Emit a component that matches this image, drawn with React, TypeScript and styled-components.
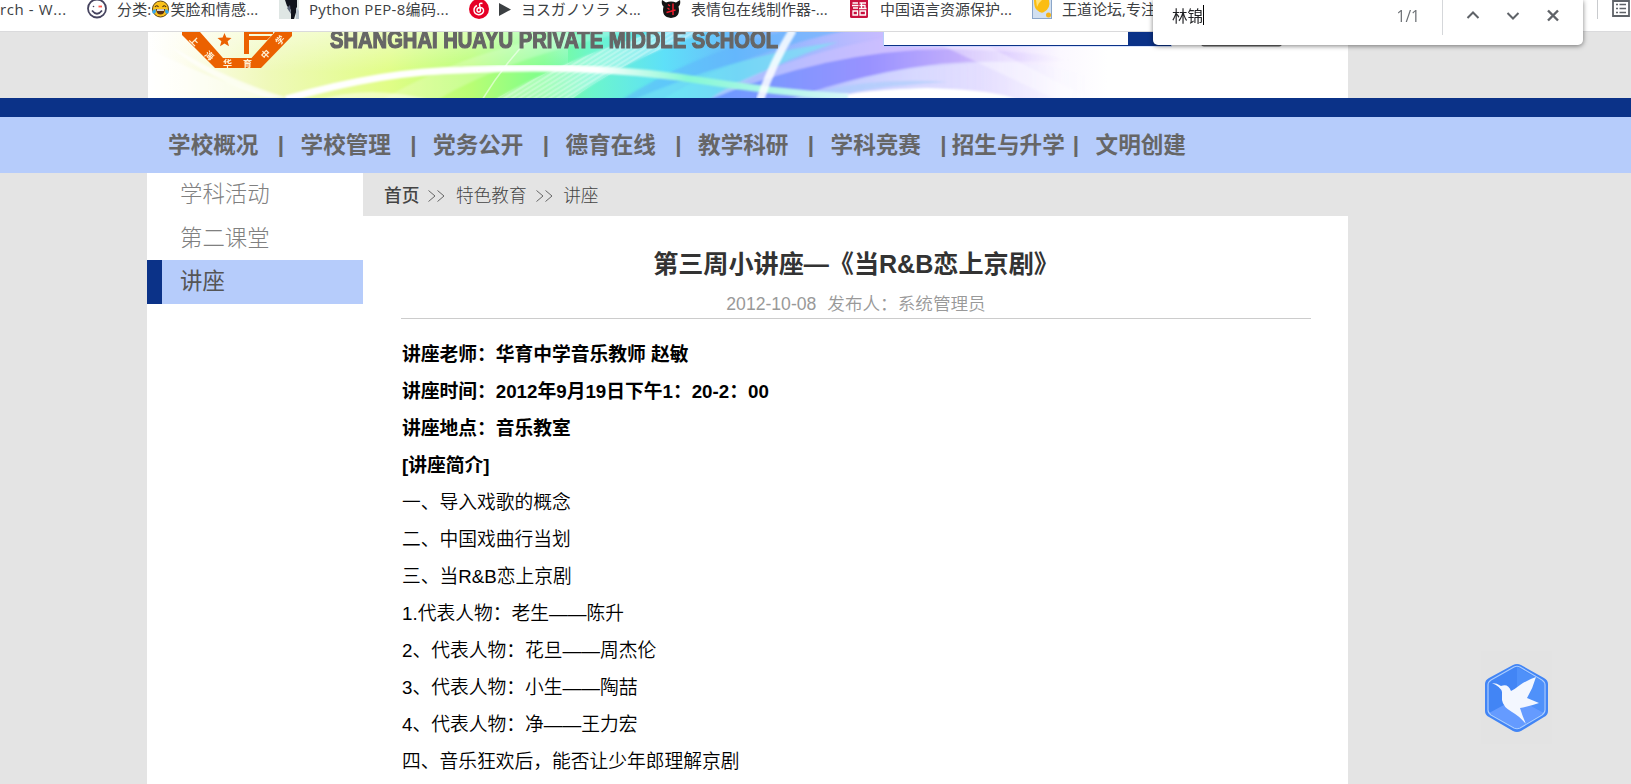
import React from "react";
import styled, { createGlobalStyle } from "styled-components";

const GlobalStyle = createGlobalStyle`
  * { box-sizing: border-box; }
  body { margin: 0; background: #e4e4e4; font-family: "Liberation Sans", "Noto Sans CJK SC", sans-serif; }
`;

const Page = styled.div`
  position: relative;
  display: flex;
  flex-direction: column;
  width: 1631px;
  height: 784px;
  overflow: hidden;
  background: #e4e4e4;
`;

const BookmarkBar = styled.div`
  display: flex;
  flex: none;
  height: 32px;
  overflow: hidden;
  background: #fff;
  border-bottom: 1px solid #dadadc;
`;

const Bookmark = styled.div<{ $w: number; $ls?: number }>`
  display: flex;
  flex: none;
  gap: 10px;
  width: ${(p) => p.$w}px;
  height: 20px;
  align-items: center;
  white-space: nowrap;
  font: 15px/18px "Open Sans", "Noto Sans CJK SC", sans-serif;
  letter-spacing: ${(p) => p.$ls ?? 0}px;
  color: #3c4043;
  svg { flex: none; }
`;

const BookmarkLabel = styled.span`
  display: flex;
  align-items: center;
  height: 20px;
  padding-bottom: 2px;
`;

const ListButton = styled.div`
  display: flex;
  margin-left: auto;
  padding: 0 1px 0 14px;
  height: 19px;
  border-left: 1px solid #c9cbce;
`;

const FindBar = styled.div`
  position: absolute;
  top: 0;
  left: 1153px;
  display: flex;
  width: 430px;
  height: 45px;
  padding-left: 19px;
  background: #fff;
  border-radius: 0 0 5px 5px;
  box-shadow: 0 1px 5px rgba(0, 0, 0, 0.5);
  font: 15.5px/32px "Open Sans", "Noto Sans CJK SC", sans-serif;
  color: #202124;
`;

const Query = styled.span`
  height: 20px;
  margin-top: 5px;
  line-height: 22px;
  border-right: 1px solid #000;
`;

const Count = styled.span`
  margin-left: auto;
  padding-right: 22px;
  color: #6b6f74;
`;

const FindActions = styled.div`
  display: flex;
  width: 141px;
  height: 35px;
  border-left: 1px solid #d5d7da;
`;

const Banner = styled.div`
  flex: none;
  height: 66px;
  padding-left: 148px;
  svg { display: block; }
`;

const Stripe = styled.div`
  flex: none;
  height: 19px;
  background: #0b3288;
`;

const Nav = styled.nav`
  display: flex;
  flex: none;
  height: 56px;
  padding-left: 147px;
  background: #b6ccfb;
`;

const NavItem = styled.a`
  display: flex;
  align-items: center;
  justify-content: center;
  width: 132.5px;
  height: 52px;
  white-space: nowrap;
  font-size: 22.6px;
  font-weight: 700;
  color: #666;
`;

const NavDivider = styled.span`
  width: 0;
  display: flex;
  justify-content: center;
  text-indent: 3px;
  font-size: 22.5px;
  font-weight: 700;
  line-height: 56px;
  color: #666;
`;

const Main = styled.div`
  display: flex;
  flex: 1;
  padding-left: 147px;
`;

const Sidebar = styled.aside`
  width: 216px;
  background: #fff;
`;

const SideItem = styled.div<{ $active?: boolean }>`
  height: ${(p) => (p.$active ? 44 : 43.5)}px;
  padding-left: ${(p) => (p.$active ? 18 : 33)}px;
  border-left: ${(p) => (p.$active ? "15px solid #0b3288" : "0")};
  background: ${(p) => (p.$active ? "#b6ccfb" : "#fff")};
  font-size: 22.4px;
  line-height: ${(p) => (p.$active ? 44 : 43)}px;
  font-weight: ${(p) => (p.$active ? 400 : 300)};
  color: ${(p) => (p.$active ? "#555" : "#808080")};
`;

const Content = styled.main`
  display: flex;
  flex-direction: column;
  width: 985px;
`;

const Crumbs = styled.div`
  display: flex;
  height: 43px;
  padding-left: 21px;
  font: 300 17.7px/43px "Noto Sans CJK SC", sans-serif;
  color: #444;
`;

const Home = styled.span`
  font-weight: 500;
`;

const CrumbArrow = styled.svg`
  width: 17px;
  height: 43px;
  margin: 0 10.5px 0 9px;
`;

const Article = styled.article`
  flex: 1;
  padding: 28px 37px 0 38px;
  background: #fff;
`;

const Title = styled.h1`
  margin: 0;
  height: 40px;
  font-size: 25.1px;
  line-height: 40px;
  font-weight: 700;
  text-align: center;
  color: #333;
`;

const Meta = styled.div`
  display: flex;
  justify-content: center;
  gap: 11px;
  height: 35px;
  border-bottom: 1px solid #ccc;
  font-size: 17.6px;
  line-height: 41px;
  font-weight: 350;
  color: #999;
`;

const DateText = styled.span`
  font-weight: 400;
`;

const Body = styled.div`
  padding: 17px 0 0 1px;
`;

const Line = styled.p<{ $bold?: boolean }>`
  margin: 0;
  height: 37px;
  line-height: 37px;
  white-space: pre;
  font-size: 18.75px;
  font-weight: ${(p) => (p.$bold ? 700 : 350)};
  color: #000;
`;

const FloatingBird = styled.div`
  position: absolute;
  left: 1481px;
  top: 651px;
  width: 71px;
  height: 93px;
  background: #e3e3e3;
`;

const LOGO_CHARS = [
  { c: "上", x: 46.5, y: 9, r: 45 },
  { c: "海", x: 61.5, y: 23.5, r: 40 },
  { c: "华", x: 79.5, y: 31, r: 0 },
  { c: "育", x: 99.5, y: 31, r: 0 },
  { c: "中", x: 117.5, y: 22, r: -45 },
  { c: "学", x: 132, y: 8, r: -45 },
];

function BannerArt() {
  return (
    <svg width="1200" height="66" viewBox="0 0 1200 66">
      <defs>
        <linearGradient id="base" gradientUnits="userSpaceOnUse" x1="0" y1="0" x2="1200" y2="0">
          <stop offset="0" stopColor="#fff" />
          <stop offset=".03" stopColor="#fdfdec" />
          <stop offset=".1" stopColor="#eff9b9" />
          <stop offset=".2" stopColor="#e1fd87" />
          <stop offset=".27" stopColor="#b8fe74" />
          <stop offset=".33" stopColor="#7cfe8c" />
          <stop offset=".37" stopColor="#6cf6cc" />
          <stop offset=".43" stopColor="#5ee0f8" />
          <stop offset=".49" stopColor="#6cbafc" />
          <stop offset=".55" stopColor="#a3b8ff" />
          <stop offset=".62" stopColor="#cdbcff" />
          <stop offset=".69" stopColor="#e3d2ff" />
          <stop offset=".76" stopColor="#fbf8ff" />
          <stop offset=".8" stopColor="#fff" />
        </linearGradient>
        <linearGradient id="topFade" x1="0" y1="0" x2="0" y2="1">
          <stop offset="0" stopColor="#fff" stopOpacity=".45" />
          <stop offset="1" stopColor="#fff" stopOpacity="0" />
        </linearGradient>
        <linearGradient id="violet" gradientUnits="userSpaceOnUse" x1="560" y1="0" x2="920" y2="0">
          <stop offset="0" stopColor="#6a9bff" />
          <stop offset=".45" stopColor="#9992ff" />
          <stop offset=".7" stopColor="#c3aefc" />
          <stop offset="1" stopColor="#efe6ff" stopOpacity="0" />
        </linearGradient>
        <linearGradient id="haze" gradientUnits="userSpaceOnUse" x1="640" y1="0" x2="960" y2="0">
          <stop offset="0" stopColor="#b6c4ff" />
          <stop offset=".4" stopColor="#d8dcff" />
          <stop offset="1" stopColor="#fff" stopOpacity="0" />
        </linearGradient>
        <linearGradient id="swoosh" gradientUnits="userSpaceOnUse" x1="120" y1="0" x2="720" y2="0">
          <stop offset="0" stopColor="#fff" />
          <stop offset=".55" stopColor="#fff" />
          <stop offset=".7" stopColor="#86f8d4" />
          <stop offset="1" stopColor="#dff6ff" />
        </linearGradient>
        <pattern id="hatch" width="4" height="4" patternUnits="userSpaceOnUse" patternTransform="rotate(-32)">
          <path d="M0 1H4" stroke="#fff" strokeWidth="1" opacity=".5" />
        </pattern>
        <filter id="soft"><feGaussianBlur stdDeviation="1" /></filter>
      </defs>
      <rect width="1200" height="66" fill="url(#base)" />
      <rect width="420" height="40" fill="url(#topFade)" />
      <g filter="url(#soft)">
        <path d="M0 66V15Q50 44 130 66Z" fill="#fff" opacity=".6" />
        <path d="M22 14Q80 48 140 66H122Q60 48 22 14Z" fill="#fff" opacity=".7" />
        <path d="M510 70Q590 22 700 -2H640Q540 24 470 70Z" fill="#5eb4fb" opacity=".55" />
        <path d="M480 70Q590 22 690 10Q600 40 570 70Z" fill="#77e9f2" opacity=".6" />
        <path d="M560 68Q630 20 790 -3L850 -3Q700 22 650 68Z" fill="#cdbfff" opacity=".6" />
        <path d="M560 68Q680 18 800 17Q880 18 940 30Q740 24 660 68Z" fill="url(#violet)" />
        <path d="M640 68Q760 25 860 30Q940 35 1000 66Z" fill="url(#haze)" opacity=".85" />
        <path d="M640 68Q710 44 800 50Q700 56 680 68Z" fill="#a9cdfc" opacity=".6" />
        <path d="M680 68Q700 58 780 56Q850 58 870 68Z" fill="#fff" />
        <path d="M230 70Q340 5 470 -4L500 -4Q370 20 285 70Z" fill="#fff" opacity=".22" />
        <path d="M165 70Q220 50 290 70Z" fill="#fff" opacity=".45" />
        <path d="M342 70Q430 20 520 -3L566 -3Q470 30 420 70Z" fill="#eaffff" opacity=".4" />
        <path d="M795 14L905 66H940L840 14Z" fill="#fff" opacity=".35" />
      </g>
      <path d="M342 70Q430 20 520 -3L566 -3Q470 30 420 70Z" fill="url(#hatch)" />
      <path d="M138 67Q235 39 315 38Q430 32 530 45Q620 60 700 65" fill="none" stroke="url(#swoosh)" strokeWidth="7" filter="url(#soft)" />
      <path d="M645 -2Q625 30 612 68" fill="none" stroke="#fff" strokeWidth="8" opacity=".85" filter="url(#soft)" />
      <path d="M390 -2Q360 26 334 68" fill="none" stroke="#fff" strokeWidth="1.5" opacity=".55" />
      <g fill="#eb6100">
        <path d="M34 0V3L67 36H113L144 4V0H127L103.500 26H75L52 0Z" />
        <path d="M76.500 1L78.400 5.600L83.500 6L79.600 9.300L81 14.200L76.500 11.600L72 14.200L73.400 9.300L69.500 6L74.600 5.600Z" />
        <path d="M96 0H125V2H101V4H123L119 8H101V22H96Z" />
      </g>
      {LOGO_CHARS.map((k) => (
        <text
          key={k.c}
          transform={`translate(${k.x} ${k.y}) rotate(${k.r})`}
          textAnchor="middle"
          dominantBaseline="central"
          fontFamily="Noto Sans CJK SC, sans-serif"
          fontSize="9"
          fontWeight="700"
          fill="#fff3d8"
        >
          {k.c}
        </text>
      ))}
      <text
        x="182"
        y="16"
        textLength="448"
        lengthAdjust="spacingAndGlyphs"
        fontFamily="Liberation Sans Narrow, Liberation Sans, sans-serif"
        fontWeight="700"
        fontSize="23"
        fill="#666"
        stroke="#666"
        strokeWidth="1.2"
      >
        SHANGHAI HUAYU PRIVATE MIDDLE SCHOOL
      </text>
      <path d="M736 0H1024V14.500H736Z" fill="#b6ccfb" />
      <path d="M736 0H1023V14H736Z" fill="#0b3288" />
      <path d="M736 0H980V13H736Z" fill="#fff" />
      <path d="M735.500 0V14" stroke="#b6ccfb" />
      <path d="M1053 0V11Q1053 14.500 1056 14.500H1131Q1134 14.500 1134 11V0Z" fill="#666" />
    </svg>
  );
}

const WinkIcon = () => (
  <svg width="20" height="20" viewBox="0 0 20 20" fill="none" stroke="#46445f" strokeWidth="1.800">
    <circle cx="10" cy="8.500" r="9" />
    <path d="M5 10.500Q10 17 15 10.500" />
    <path d="M11.500 6.500H15" stroke="#ff5b4d" />
    <circle cx="6.500" cy="6.500" r=".8" fill="#46445f" stroke="none" />
  </svg>
);

const JoyIcon = () => (
  <svg width="19" height="18" viewBox="0 0 18 18">
    <circle cx="9" cy="9" r="8" fill="#fbc21b" stroke="#5f4517" />
    <path d="M3.500 7Q5 4.500 7 7M11 7Q13 4.500 14.500 7" fill="none" stroke="#4a3010" strokeWidth="1.200" />
    <path d="M4.500 9H13.500Q13 14.500 9 14.500T4.500 9Z" fill="#5b3216" />
    <path d="M5.500 9.300H12.500V10.800H5.500Z" fill="#fff" />
    <path d="M4 9Q0 10.500 1 13Q3 15 4.500 12ZM14 9Q18 10.500 17 13Q15 15 13.500 12Z" fill="#35a8ec" />
  </svg>
);

const PhotoIcon = () => (
  <svg width="20" height="20" viewBox="0 0 20 20">
    <path d="M0 0H20V19H0Z" fill="#dfe6e4" />
    <path d="M6 0H18V9L15 19H12V10L8 6Z" fill="#10131c" />
    <path d="M8 8L11 5L12 14Z" fill="#5a6376" />
    <path d="M17 7L20 11V19H17Z" fill="#b9c5cf" />
  </svg>
);

const MusicIcon = () => (
  <svg width="20" height="20" viewBox="0 0 20 20" fill="none" stroke="#fff" strokeWidth="1.400">
    <circle cx="10" cy="9" r="10" fill="#e60026" stroke="none" />
    <path d="M13.500 3.500Q10.500 2.500 10.500 5L11.500 10Q11.500 12 9.800 12Q8 12 8 10Q8 7.500 11.500 7.500Q15 8 14.500 11.500Q13 15 9.500 14.800Q5 14 5 10Q5 7 8 5.500" />
  </svg>
);

const DevilIcon = () => (
  <svg width="20" height="20" viewBox="0 0 20 20">
    <path d="M1 0L5 2.500Q10 .5 15 2.500L19 0Q20 4 17.500 6.500Q20 17 10 18Q0 17 2.500 6.500Q0 4 1 0Z" fill="#141414" />
    <path d="M7 4.500L9 6M6.500 8L8.500 9.500M5.500 12.500L14.500 10M12 3.500V15" stroke="#f01c2c" strokeWidth="1.500" fill="none" />
  </svg>
);

const SealIcon = () => (
  <svg width="20" height="20" viewBox="0 0 20 20" fill="none" stroke="#fff" strokeWidth="1.300">
    <rect x="0" y="-1" width="18" height="19" rx="1.500" fill="#c8103e" stroke="none" />
    <path d="M2.500 3H8M2 5.500H8.500M3 8H8M3 11H7.500V15H3ZM9.500 3H16M11.500 3V8M9.500 5.500H15V8M9 8.500H16.500M10 11H15.500V15H10Z" />
  </svg>
);

const PageIcon = () => (
  <svg width="20" height="20" viewBox="0 0 20 20">
    <rect x=".5" y="-3" width="19" height="21.500" fill="#d2e0f0" stroke="#8ba6c9" />
    <path d="M2 0H17Q19 8 12 12Q9 14 5 10Q2 8 2 0Z" fill="#fbbd12" />
    <path d="M4 0H10Q6 3 5 7Z" fill="#ffe27a" />
    <circle cx="16.500" cy="15" r="2.500" fill="#f5b417" />
  </svg>
);

const PlayIcon = () => (
  <svg width="12" height="16" viewBox="0 0 12 16">
    <path d="M0 1L12 7.500L0 14Z" fill="#3c4043" />
  </svg>
);

const NAV = ["学校概况", "学校管理", "党务公开", "德育在线", "教学科研", "学科竞赛", "招生与升学", "文明创建"];

const LINES = [
  { t: "讲座老师：华育中学音乐教师 赵敏", b: true },
  { t: "讲座时间：2012年9月19日下午1：20-2：00", b: true },
  { t: "讲座地点：音乐教室", b: true },
  { t: "[讲座简介]", b: true },
  { t: "一、导入戏歌的概念" },
  { t: "二、中国戏曲行当划" },
  { t: "三、当R&B恋上京剧" },
  { t: "1.代表人物：老生——陈升" },
  { t: "2、代表人物：花旦——周杰伦" },
  { t: "3、代表人物：小生——陶喆" },
  { t: "4、代表人物：净——王力宏" },
  { t: "四、音乐狂欢后，能否让少年郎理解京剧" },
];

const Arrows = () => (
  <CrumbArrow viewBox="0 0 17 43" fill="none" stroke="#666" strokeWidth="1">
    <path d="M.5 17.500L7 23L.5 28.500M9.500 17.500L16 23L9.500 28.500" />
  </CrumbArrow>
);

export default function App() {
  return (
    <Page>
      <GlobalStyle />
      <BookmarkBar>
        <Bookmark $w={87} $ls={0.6}><BookmarkLabel>rch - W...</BookmarkLabel></Bookmark>
        <Bookmark $w={192} $ls={0.15}>
          <WinkIcon />
          <BookmarkLabel>分类:<JoyIcon />笑脸和情感...</BookmarkLabel>
        </Bookmark>
        <Bookmark $w={190} $ls={0.3}><PhotoIcon /><BookmarkLabel>Python PEP-8编码...</BookmarkLabel></Bookmark>
        <Bookmark $w={192} $ls={-0.1}>
          <MusicIcon />
          <PlayIcon />
          <BookmarkLabel>ヨスガノソラ メ...</BookmarkLabel>
        </Bookmark>
        <Bookmark $w={189}><DevilIcon /><BookmarkLabel>表情包在线制作器-...</BookmarkLabel></Bookmark>
        <Bookmark $w={182}><SealIcon /><BookmarkLabel>中国语言资源保护...</BookmarkLabel></Bookmark>
        <Bookmark $w={130}><PageIcon /><BookmarkLabel>王道论坛,专注</BookmarkLabel></Bookmark>
        <ListButton>
          <svg width="18" height="18" viewBox="0 0 18 18" fill="none" stroke="#5f6368" strokeWidth="1.800">
            <path d="M1 1H17V16H1Z" />
            <path d="M4 4.500H6M7.500 4.500H14M4 8.500H6M7.500 8.500H14M4 12.500H6M7.500 12.500H14" strokeWidth="1.400" />
          </svg>
        </ListButton>
      </BookmarkBar>
      <Banner><BannerArt /></Banner>
      <Stripe />
      <Nav>
        {NAV.map((n, i) => (
          <React.Fragment key={n}>
            {i > 0 && <NavDivider>|</NavDivider>}
            <NavItem>{n}</NavItem>
          </React.Fragment>
        ))}
      </Nav>
      <Main>
        <Sidebar>
          <SideItem>学科活动</SideItem>
          <SideItem>第二课堂</SideItem>
          <SideItem $active>讲座</SideItem>
        </Sidebar>
        <Content>
          <Crumbs>
            <Home>首页</Home><Arrows />特色教育<Arrows />讲座
          </Crumbs>
          <Article>
            <Title>第三周小讲座—《当R&amp;B恋上京剧》</Title>
            <Meta><DateText>2012-10-08</DateText><span>发布人：系统管理员</span></Meta>
            <Body>
              {LINES.map((l) => <Line key={l.t} $bold={l.b}>{l.t}</Line>)}
            </Body>
          </Article>
        </Content>
      </Main>
      <FindBar>
        <Query>林锦</Query>
        <Count>1/1</Count>
        <FindActions>
          <svg width="130" height="35" viewBox="0 0 130 35" fill="none" stroke="#5f6368" strokeWidth="2">
            <path d="M24.500 18L30 12.500L35.500 18M64.500 13L70 18.500L75.500 13" />
            <path d="M105 10.500L115 20.500M115 10.500L105 20.500" strokeWidth="2.400" />
          </svg>
        </FindActions>
      </FindBar>
      <FloatingBird>
        <svg width="71" height="93" viewBox="0 0 71 93">
          <path d="M32 14Q36 12 40 14L63 27Q67 29 67 33V60Q67 64 63 66L40 80Q36 82 32 80L8 66Q4 64 4 60V33Q4 29 8 27Z" fill="#4285f5" />
          <path d="M36 16L63 31V62L36 47Z" fill="#4f91fa" />
          <path d="M36 47L63 62L36 78L8 62Z" fill="#659bff" />
          <path d="M33 16Q36 14.500 39 16L61 29Q64 31 64 34V59Q64 62 61 64L39 77Q36 78.500 33 77L10 64Q7 62 7 59V34Q7 31 10 29Z" fill="none" stroke="#a9ccff" strokeWidth="1.200" />
          <path d="M11 32Q16 32 20 35Q27 32 30 40Q34 38 39 34Q46 29 55 26Q52 37 46 47L58 52Q50 55 39 57Q41 64 45 73Q37 64 31 61Q22 56 21 49V41Q20 36 11 32Z" fill="#f3f7ff" />
        </svg>
      </FloatingBird>
    </Page>
  );
}
